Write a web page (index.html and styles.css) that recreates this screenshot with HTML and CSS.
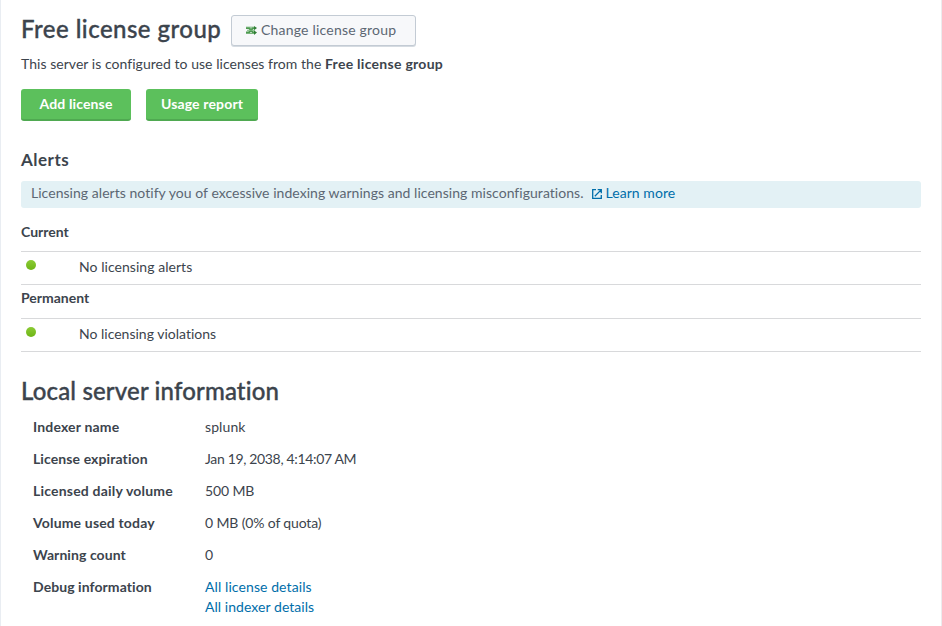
FILE: index.html
```html
<!DOCTYPE html>
<html lang="en">
<head>
<meta charset="utf-8">
<title>Licensing</title>
<link rel="stylesheet" href="styles.css">
</head>
<body>
<main class="page">
  <header class="head">
    <h1 class="title"><span class="t-free">Free license group</span></h1>
    <a class="btn-change" href="#">
      <svg class="ico-change" width="11" height="9" viewBox="0 0 11 9"><path d="M0 2h3l4 4.500h2M0 6.500h3L7 2h2" fill="none" stroke="#4d9a50" stroke-width="2"/><path d="M8 0l3 2-3 2.300zM8 4.500l3 2L8 9z" fill="#2f7d35"/><path d="M0 1.200h8M1 4.300h8M0 7.500h8" stroke="#79b57b" stroke-width="1"/></svg>
      <span class="t-change">Change license group</span>
    </a>
  </header>
  <p class="intro"><span class="t-intro">This server is configured to use licenses from the</span> <b class="t-group">Free license group</b></p>
  <div class="actions">
    <a class="btn add" href="#"><span class="t-add">Add license</span></a>
    <a class="btn usage" href="#"><span class="t-usage">Usage report</span></a>
  </div>
  <h2 class="alerts-title"><span class="t-alerts">Alerts</span></h2>
  <div class="notice">
    <span class="t-notice">Licensing alerts notify you of excessive indexing warnings and licensing misconfigurations.</span>
    <a class="learn" href="#"><svg class="ico-ext" width="10" height="10" viewBox="0 0 10 10" fill="none" stroke="currentColor" stroke-width="1.300"><path d="M4 .7H.7v8.600h8.600V6M2.800 7.200L8.600 1.400M5.700.7h3.600v3.600"/></svg><span class="t-learn">Learn more</span></a>
  </div>
  <h3 class="sub sub-current"><span class="t-current">Current</span></h3>
  <div class="alert-row"><i class="dot"></i><span class="t-noalerts">No licensing alerts</span></div>
  <h3 class="sub sub-perm"><span class="t-perm">Permanent</span></h3>
  <div class="alert-row"><i class="dot"></i><span class="t-noviol">No licensing violations</span></div>
  <h1 class="title local"><span class="t-local">Local server information</span></h1>
  <dl class="info">
    <dt><span class="k1">Indexer name</span></dt><dd><span class="v1">splunk</span></dd>
    <dt><span class="k2">License expiration</span></dt><dd><span class="v2">Jan 19, 2038, 4:14:07 AM</span></dd>
    <dt><span class="k3">Licensed daily volume</span></dt><dd><span class="v3">500 MB</span></dd>
    <dt><span class="k4">Volume used today</span></dt><dd><span class="v4">0 MB (0% of quota)</span></dd>
    <dt><span class="k5">Warning count</span></dt><dd><span class="v5">0</span></dd>
    <dt><span class="k6">Debug information</span></dt><dd><a class="v6" href="#">All license details</a><br><a class="v7" href="#">All indexer details</a></dd>
  </dl>
</main>
</body>
</html>
```
FILE: styles.css
```css
* { box-sizing: border-box; }
body { margin: 0; background: #fff; font: 14px/20px Lato, "Open Sans", sans-serif; font-variant-ligatures: none; color: #3c444d; }
a { color: #006eaa; text-decoration: none; }
.page { height: 626px; overflow: hidden; padding: 14px 20px 0; border-left: 1px solid #e9edf2; border-right: 1px solid #ececee; }
.head { display: flex; height: 33px; }
.title { margin: 0; font-size: 24px; line-height: 30px; font-weight: 500; white-space: nowrap; -webkit-text-stroke: .35px #3c444d; }
.head .title { width: 210px; }
.btn-change { display: flex; align-items: center; width: 185px; height: 31px; margin-top: 1px; padding-left: 14px; gap: 4px; border: 1px solid #c3cbd4; border-radius: 3px; box-shadow: 0 1px 0 #d5dbe1; background: #f7f8fa; color: #5c6773; white-space: nowrap; }
.t-change { padding-bottom: 2px; letter-spacing: .2px; }
.intro { margin: 7px 0 0; white-space: nowrap; }
.actions { display: flex; gap: 15px; margin-top: 15px; }
.btn { height: 32px; border-radius: 3px; background: #5cc05c; border-bottom: 2px solid #4fa951; color: #fff; font-weight: 700; text-align: center; line-height: 29px; }
.add { width: 110px; letter-spacing: .14px; }
.usage { width: 112px; letter-spacing: .15px; }
.alerts-title { margin: 29px 0 0; font-size: 17px; line-height: 20px; }
.notice { display: flex; height: 27px; margin-top: 11px; padding-left: 10px; line-height: 24px; border-radius: 3px; background: #e3f1f5; color: #5c6773; white-space: nowrap; }
.learn { display: flex; gap: 4px; margin-left: 8px; }
.ico-ext { margin-top: 8px; }
.sub { margin: 0; font-size: 14px; line-height: 20px; font-weight: 700; }
.sub-current { margin-top: 14px; height: 29px; }
.sub-perm { padding-top: 3px; height: 33px; }
.alert-row { display: flex; height: 34px; padding-left: 5px; border-top: 1px solid #d8d9db; border-bottom: 1px solid #d8d9db; line-height: 30px; }
.dot { width: 10px; height: 10px; margin: 8px 43px 0 0; border-radius: 50%; background: linear-gradient(#8bcb35, #6eb516); }
.local { margin-top: 24px; }
.info { display: grid; grid-template-columns: 172px 1fr; row-gap: 12px; margin: 11px 0 0 12px; }
dt { font-weight: 700; }
dd { margin: 0; }
.t-free { letter-spacing: .46px; }
.t-local { letter-spacing: .15px; }
.t-intro { letter-spacing: .04px; }
.t-group { letter-spacing: .28px; }
.t-alerts { letter-spacing: .5px; }
.t-notice { letter-spacing: .038px; }
.t-learn { letter-spacing: .05px; }
.t-noalerts { letter-spacing: .05px; }
.k1, .k4 { letter-spacing: .17px; }
.k2 { letter-spacing: .1px; }
.k3 { letter-spacing: .2px; }
.k5, .k6 { letter-spacing: .07px; }
.v1 { letter-spacing: .1px; }
.v2 { letter-spacing: -.34px; }
.v3, .v4 { letter-spacing: -.14px; }
.v6 { letter-spacing: .09px; }
.v7 { letter-spacing: .05px; }
```
